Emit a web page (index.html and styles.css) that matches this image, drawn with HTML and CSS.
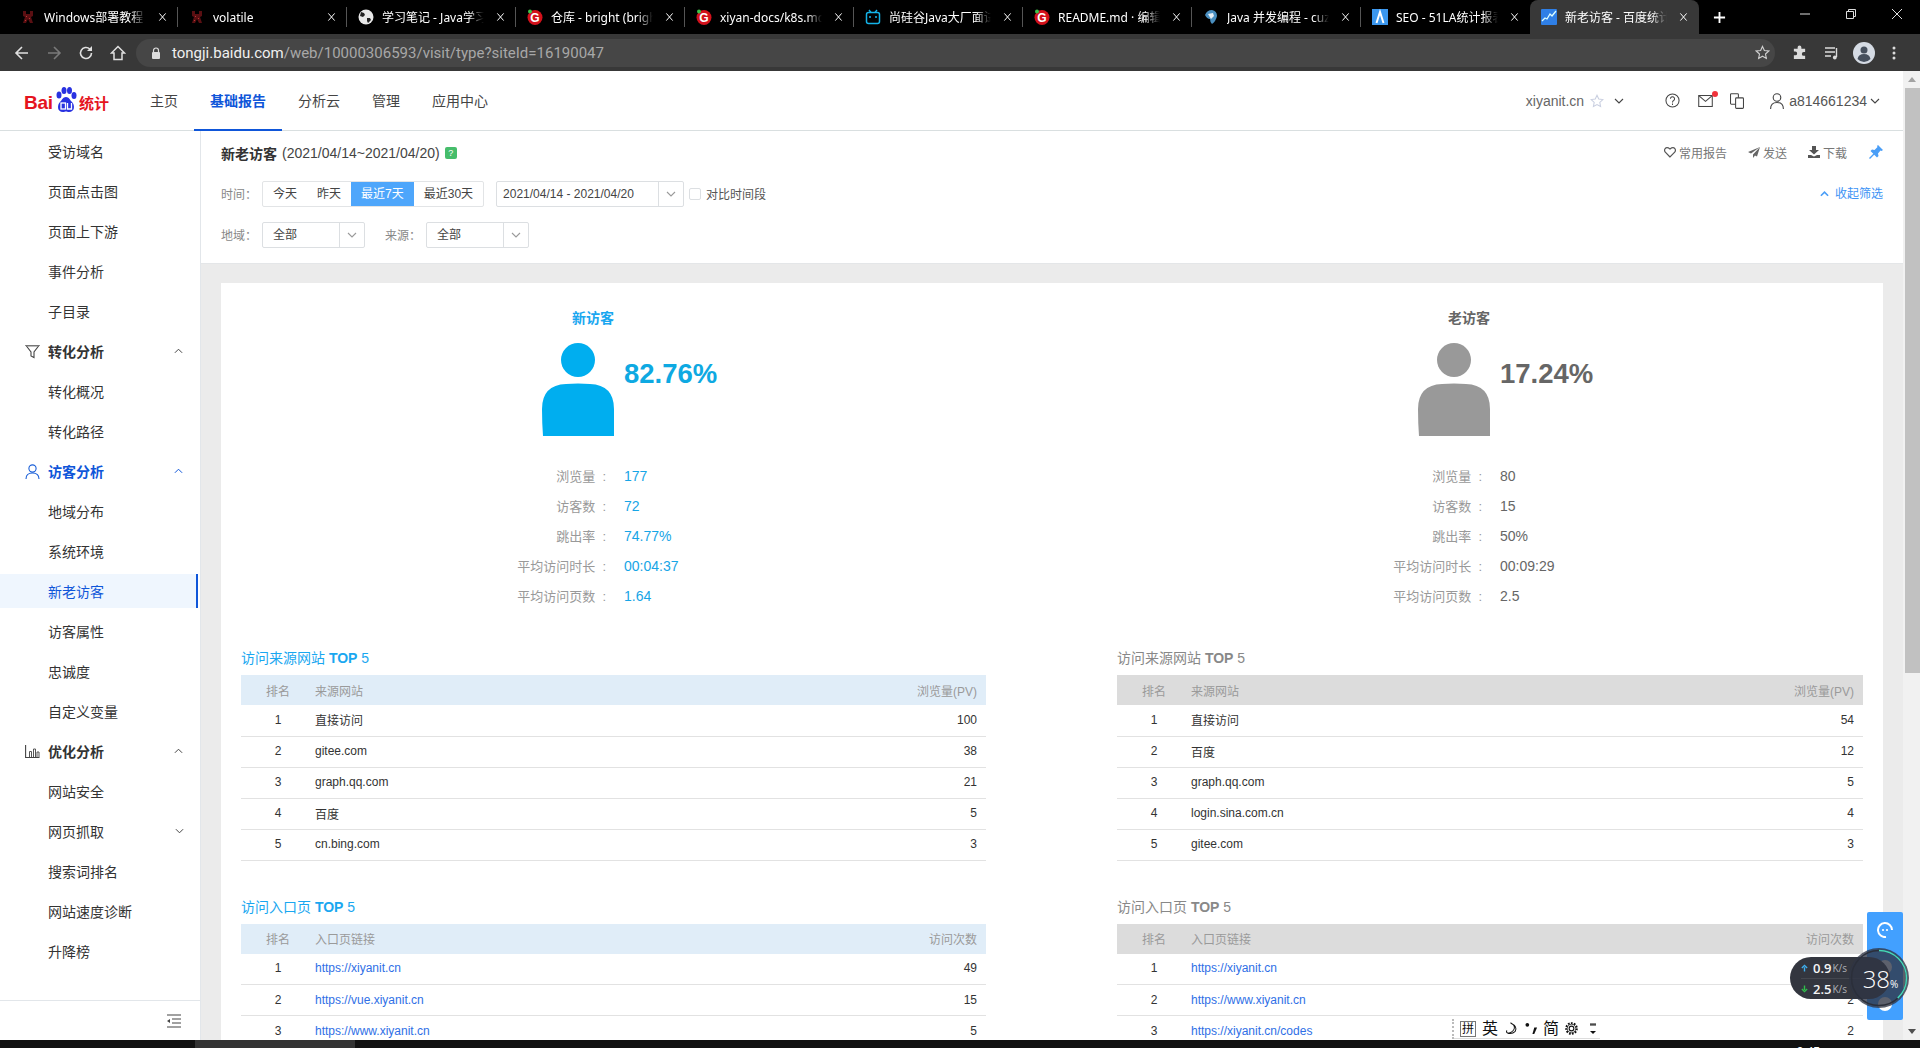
FILE: index.html
```html
<!DOCTYPE html>
<html lang="zh-CN">
<head>
<meta charset="utf-8">
<title>新老访客 - 百度统计</title>
<link rel="stylesheet" href="styles.css">
</head>
<body>
<svg class="defs" width="0" height="0" aria-hidden="true">
  <symbol id="i-x" viewBox="0 0 10 10"><path d="M1.500 1l7 8M8.500 1l-7 8" fill="none" stroke="#fff" stroke-width="1.100"/></symbol>
  <symbol id="f-red" viewBox="0 0 16 16"><path d="M3 2h3v3h4V2h3v5l-2 1 2 6h-3l-2-4-2 4H3l2-6-2-1z" fill="#5a0f12"/><path d="M6 7h1v1H6zM9 9h1v1H9zM5 11h1v1H5z" fill="#b33"/></symbol>
  <symbol id="f-gitee" viewBox="0 0 16 16"><circle cx="8" cy="8.500" r="7.500" fill="#d3111b"/><circle cx="3" cy="2.500" r="2" fill="#3ec24a"/><text x="8" y="13" text-anchor="middle" font-family="Liberation Sans" font-weight="bold" font-size="12" fill="#fff">G</text></symbol>
  <symbol id="f-globe" viewBox="0 0 16 16"><circle cx="8" cy="8" r="7.500" fill="#e8e8e8"/><path d="M3 3l3 1 1 2-2 2-3-1zM9 9l3 0 1 2-3 3-1-2z" fill="#222"/></symbol>
  <symbol id="f-tv" viewBox="0 0 16 16"><path d="M4 1l2 2.500M12 1l-2 2.500" stroke="#14b3e8" stroke-width="1.400"/><rect x="1.500" y="3.500" width="13" height="11" rx="2" fill="none" stroke="#14b3e8" stroke-width="1.500"/><path d="M5 7v2M11 7v2" stroke="#14b3e8" stroke-width="1.500"/></symbol>
  <symbol id="f-shark" viewBox="0 0 16 16"><path d="M2 6Q4 1 9 1q5 1 5 6-1 5-5 8-2-2-2-5Q4 10 2 6z" fill="#4a8fc0"/><path d="M5 5l5-1 1 3-3 3z" fill="#e6eef5"/></symbol>
  <symbol id="f-a" viewBox="0 0 16 16"><rect width="16" height="16" fill="#3b97ee"/><path d="M4.500 14L8 3l3.500 11" fill="none" stroke="#fff" stroke-width="2"/></symbol>
  <symbol id="f-chart" viewBox="0 0 16 16"><rect width="16" height="16" rx="1" fill="#2f7fe6"/><path d="M1 12l3-3 2 1 3-5 2 2 4-5" fill="none" stroke="#dff" stroke-width="1.300"/></symbol>
  <symbol id="i-down" viewBox="0 0 10 6"><path d="M1 1l4 4 4-4" fill="none" stroke="currentColor" stroke-width="1.100"/></symbol>
  <symbol id="i-up" viewBox="0 0 10 6"><path d="M1 5l4-4 4 4" fill="none" stroke="currentColor" stroke-width="1.100"/></symbol>
  <symbol id="i-person" viewBox="0 0 72 93"><circle cx="36" cy="17" r="17"/><path d="M1 93Q0 80 0 66 0 42 24 41q12-1 24 0 24 1 24 25v27z"/></symbol>
</svg>

<div class="window">
  <header class="tabstrip">
    <div class="tab"><svg class="favicon"><use href="#f-red"/></svg><span class="tab-title">Windows部署教程</span><svg class="tab-x"><use href="#i-x"/></svg></div>
    <div class="tab"><svg class="favicon"><use href="#f-red"/></svg><span class="tab-title">volatile</span><svg class="tab-x"><use href="#i-x"/></svg></div>
    <div class="tab"><svg class="favicon"><use href="#f-globe"/></svg><span class="tab-title">学习笔记 - Java学习笔记</span><svg class="tab-x"><use href="#i-x"/></svg></div>
    <div class="tab"><svg class="favicon"><use href="#f-gitee"/></svg><span class="tab-title">仓库 - bright (bright)</span><svg class="tab-x"><use href="#i-x"/></svg></div>
    <div class="tab"><svg class="favicon"><use href="#f-gitee"/></svg><span class="tab-title">xiyan-docs/k8s.md</span><svg class="tab-x"><use href="#i-x"/></svg></div>
    <div class="tab"><svg class="favicon"><use href="#f-tv"/></svg><span class="tab-title">尚硅谷Java大厂面试题</span><svg class="tab-x"><use href="#i-x"/></svg></div>
    <div class="tab"><svg class="favicon"><use href="#f-gitee"/></svg><span class="tab-title">README.md · 编辑器</span><svg class="tab-x"><use href="#i-x"/></svg></div>
    <div class="tab"><svg class="favicon"><use href="#f-shark"/></svg><span class="tab-title">Java 并发编程 - cuz</span><svg class="tab-x"><use href="#i-x"/></svg></div>
    <div class="tab tab-before-active"><svg class="favicon"><use href="#f-a"/></svg><span class="tab-title">SEO - 51LA统计报表</span><svg class="tab-x"><use href="#i-x"/></svg></div>
    <div class="tab tab-active"><svg class="favicon"><use href="#f-chart"/></svg><span class="tab-title">新老访客 - 百度统计</span><svg class="tab-x"><use href="#i-x"/></svg></div>
    <svg class="tab-plus" viewBox="0 0 14 14"><path d="M7 1v12M1 7h12" stroke="#fff" stroke-width="2"/></svg>
    <div class="winctl">
      <svg viewBox="0 0 12 12"><path d="M1 6h10" stroke="#ddd"/></svg>
      <svg viewBox="0 0 12 12"><path d="M1.500 3.500h7v7h-7zM3.500 3V1.500h7v7H9" fill="none" stroke="#ddd"/></svg>
      <svg viewBox="0 0 12 12"><path d="M1 1l10 10M11 1L1 11" stroke="#ddd"/></svg>
    </div>
  </header>

  <div class="toolbar">
    <svg class="tb-icon" viewBox="0 0 16 16"><path d="M14 8H2.500M8 2L2 8l6 6" fill="none" stroke="#e0e0e0" stroke-width="1.600"/></svg>
    <svg class="tb-icon" viewBox="0 0 16 16"><path d="M2 8h11.500M8 2l6 6-6 6" fill="none" stroke="#7a7a7a" stroke-width="1.600"/></svg>
    <svg class="tb-icon" viewBox="0 0 16 16"><path d="M13.500 8A5.500 5.500 0 1 1 11.800 4" fill="none" stroke="#e0e0e0" stroke-width="1.600"/><path d="M14 1v5H9z" fill="#e0e0e0"/></svg>
    <svg class="tb-icon" viewBox="0 0 16 16"><path d="M8 1.500L1.500 8H4v6.500h8V8h2.500z" fill="none" stroke="#e0e0e0" stroke-width="1.500"/></svg>
    <div class="omnibox">
      <svg class="lock" viewBox="0 0 10 12"><path d="M2.500 5V3.500a2.500 2.500 0 0 1 5 0V5" fill="none" stroke="#ddd" stroke-width="1.200"/><rect x="1" y="5" width="8" height="7" rx="1" fill="#ddd"/></svg>
      <span class="url"><span class="url-host">tongji.baidu.com</span>/web/10000306593/visit/type?siteId=16190047</span>
      <svg class="omni-star" viewBox="0 0 16 16"><path d="M8 1.500l2 4.300 4.700.6-3.500 3.200.9 4.700L8 12l-4.100 2.300.9-4.700-3.500-3.200L6 5.800z" fill="none" stroke="#d0d0d0" stroke-width="1.200"/></svg>
    </div>
    <svg class="tb-right puzzle" viewBox="0 0 16 16"><path d="M6 2.500a2 2 0 0 1 4 0V4h4v3.500h-1.500a2 2 0 0 0 0 4H14V15H2v-4h1.500a2 2 0 0 0 0-4H2V4h4z" fill="#dcdcdc"/></svg>
    <svg class="tb-right media" viewBox="0 0 16 16"><path d="M1 3h10M1 7h10M1 11h6" stroke="#dcdcdc" stroke-width="1.400"/><path d="M12.500 3v9" stroke="#dcdcdc" stroke-width="1.400"/><circle cx="10.800" cy="12.500" r="1.900" fill="#dcdcdc"/></svg>
    <svg class="tb-right avatar" viewBox="0 0 22 22"><circle cx="11" cy="11" r="11" fill="#d5dbe4"/><circle cx="11" cy="8" r="3.500" fill="#46505e"/><path d="M4.500 17q1-5 6.500-5t6.500 5q-3 3-6.500 3t-6.500-3z" fill="#46505e"/></svg>
    <svg class="tb-right dots" viewBox="0 0 4 16"><circle cx="2" cy="3" r="1.500" fill="#dcdcdc"/><circle cx="2" cy="8" r="1.500" fill="#dcdcdc"/><circle cx="2" cy="13" r="1.500" fill="#dcdcdc"/></svg>
  </div>

  <div class="viewport">
    <div class="page">
      <nav class="topnav">
        <div class="logo">
          <span class="logo-bai">Bai</span>
          <svg class="logo-paw" viewBox="0 0 24 26"><ellipse cx="5" cy="8" rx="2.500" ry="3.500" fill="#2932e1"/><ellipse cx="10" cy="3.500" rx="2.500" ry="3.500" fill="#2932e1"/><ellipse cx="15.500" cy="3.500" rx="2.500" ry="3.500" fill="#2932e1"/><ellipse cx="20" cy="8.500" rx="2.500" ry="3.500" fill="#2932e1"/><path d="M12 10c3 0 4 3 6 5 3 3 3 10-3 10-1.500 0-2-.5-3-.5s-1.500.5-3 .5c-6 0-6-7-3-10 2-2 3-5 6-5z" fill="#2932e1"/><rect x="7" y="16" width="4.500" height="6" fill="none" stroke="#fff" stroke-width="1.300"/><path d="M13.500 16v6h4v-6" fill="none" stroke="#fff" stroke-width="1.300"/></svg>
          <span class="logo-cn">统计</span>
        </div>
        <a class="nav-item">主页</a>
        <a class="nav-item nav-active">基础报告</a>
        <a class="nav-item">分析云</a>
        <a class="nav-item">管理</a>
        <a class="nav-item">应用中心</a>
        <div class="nav-right">
          <span class="site-name">xiyanit.cn</span>
          <svg class="nr-star" viewBox="0 0 16 16"><path d="M8 1.500l2 4.300 4.700.6-3.500 3.200.9 4.700L8 12l-4.100 2.300.9-4.700-3.500-3.200L6 5.800z" fill="none" stroke="#c9cfe0" stroke-width="1.200"/></svg>
          <svg class="nr-chev"><use href="#i-down"/></svg>
          <svg class="nr-help" viewBox="0 0 16 16"><circle cx="8" cy="8" r="7" fill="none" stroke="#444" stroke-width="1.100"/><path d="M5.800 6.200a2.200 2.200 0 1 1 3.400 1.800Q8 8.700 8 10M8 11.300v1.400" fill="none" stroke="#444" stroke-width="1.100"/></svg>
          <span class="nr-mail"><svg viewBox="0 0 17 14"><rect x=".6" y=".6" width="15.800" height="12.800" fill="none" stroke="#444" stroke-width="1.200"/><path d="M1 1l7.500 6.500L16 1" fill="none" stroke="#444" stroke-width="1.200"/></svg><i class="mail-dot"></i></span>
          <svg class="nr-copy" viewBox="0 0 16 18"><rect x=".6" y=".6" width="9" height="12" rx="1" fill="none" stroke="#444" stroke-width="1.200"/><rect x="6.400" y="5.400" width="9" height="12" rx="1" fill="#fff" stroke="#444" stroke-width="1.200"/></svg>
          <svg class="nr-user" viewBox="0 0 14 16"><circle cx="7" cy="4.500" r="3.800" fill="none" stroke="#444" stroke-width="1.100"/><path d="M.6 16q0-6.500 6.400-6.500T13.400 16" fill="none" stroke="#444" stroke-width="1.100"/></svg>
          <span class="user-name">a814661234</span>
          <svg class="nr-chev2"><use href="#i-down"/></svg>
        </div>
      </nav>

      <div class="layout">
        <aside class="sidebar">
          <a class="side-item">受访域名</a>
          <a class="side-item">页面点击图</a>
          <a class="side-item">页面上下游</a>
          <a class="side-item">事件分析</a>
          <a class="side-item">子目录</a>
          <a class="side-group">
            <svg class="side-icon" viewBox="0 0 15 15"><path d="M1 1.500h13L9 8v5.500L6 12V8z" fill="none" stroke="#444" stroke-width="1.100"/><path d="M1 1h13v1.500H1z" fill="#777"/></svg>
            <span>转化分析</span><svg class="side-chev"><use href="#i-up"/></svg>
          </a>
          <a class="side-item">转化概况</a>
          <a class="side-item">转化路径</a>
          <a class="side-group side-group-on">
            <svg class="side-icon" viewBox="0 0 15 15"><circle cx="7.500" cy="4.500" r="3.600" fill="none" stroke="#1a5fd8" stroke-width="1.100"/><path d="M1 15q0-6 6.500-6T14 15" fill="none" stroke="#1a5fd8" stroke-width="1.100"/></svg>
            <span>访客分析</span><svg class="side-chev"><use href="#i-up"/></svg>
          </a>
          <a class="side-item">地域分布</a>
          <a class="side-item">系统环境</a>
          <a class="side-item side-active">新老访客</a>
          <a class="side-item">访客属性</a>
          <a class="side-item">忠诚度</a>
          <a class="side-item">自定义变量</a>
          <a class="side-group">
            <svg class="side-icon" viewBox="0 0 15 15"><path d="M.6 1v12.500H14.500" fill="none" stroke="#444" stroke-width="1.100"/><path d="M4.500 13V7.500h2V13M8.500 13V5h2v8M12 13V8h2v5" fill="none" stroke="#555" stroke-width="1"/></svg>
            <span>优化分析</span><svg class="side-chev"><use href="#i-up"/></svg>
          </a>
          <a class="side-item">网站安全</a>
          <a class="side-item side-more">网页抓取<svg class="side-chev side-chev-down"><use href="#i-down"/></svg></a>
          <a class="side-item">搜索词排名</a>
          <a class="side-item">网站速度诊断</a>
          <a class="side-item">升降榜</a>
          <div class="side-foot">
            <svg viewBox="0 0 14 14"><path d="M0 1h14M5 5h9M5 9h9M0 13h14" stroke="#444" stroke-width="1.100"/><path d="M0 7l3-2v4z" fill="#444"/></svg>
          </div>
        </aside>

        <main class="content">
          <section class="filters">
            <div class="f-head">
              <strong class="f-name">新老访客</strong>
              <span class="f-date">(2021/04/14~2021/04/20)</span>
              <span class="f-help">?</span>
              <div class="f-actions">
                <span class="act"><svg viewBox="0 0 12 12"><path d="M6 11L1.300 6.200Q0 4.500 1 2.800 2.800.6 6 3q3.200-2.400 5 -.2 1 1.700-.3 3.400z" fill="none" stroke="#555" stroke-width="1.200"/></svg>常用报告</span>
                <span class="act"><svg viewBox="0 0 12 12"><path d="M12 1L0 6l3 1.500zM12 1L5 8.500V12l2-2.500 2 1z" fill="#666"/></svg>发送</span>
                <span class="act"><svg viewBox="0 0 12 12"><path d="M4 0h4v4h3L6 8.500 1 4h3z" fill="#555"/><path d="M0 9h3l3 1.500L9 9h3v3H0z" fill="#555"/></svg>下载</span>
                <svg class="act-pin" viewBox="0 0 14 14"><path d="M9 0l5 5-1.500 1-1-.5L9 8.500 9.500 11 8 12.500 5.200 9.700 1 14l-1-1 4.300-4.200L1.500 6 3 4.500 5.500 5 8.500 2 8 1z" fill="#4a9ef7"/></svg>
              </div>
            </div>
            <div class="f-row f-row-time">
              <span class="f-label">时间：</span>
              <div class="seg">
                <a class="seg-btn">今天</a><a class="seg-btn">昨天</a><a class="seg-btn seg-on">最近7天</a><a class="seg-btn">最近30天</a>
              </div>
              <div class="select select-date"><span class="select-text">2021/04/14 - 2021/04/20</span><span class="select-arrow"><svg><use href="#i-down"/></svg></span></div>
              <label class="compare"><i class="check"></i><span class="compare-text">对比时间段</span></label>
              <a class="collapse"><svg viewBox="0 0 10 6"><path d="M1 5l4-4 4 4" fill="none" stroke="#4a9ef7" stroke-width="1.800"/></svg><span class="collapse-text">收起筛选</span></a>
            </div>
            <div class="f-row f-row-region">
              <span class="f-label">地域：</span>
              <div class="select select-all"><span class="select-text">全部</span><span class="select-arrow"><svg><use href="#i-down"/></svg></span></div>
              <span class="f-label f-label-src">来源：</span>
              <div class="select select-all"><span class="select-text">全部</span><span class="select-arrow"><svg><use href="#i-down"/></svg></span></div>
            </div>
          </section>

          <section class="card">
            <div class="col col-new">
              <h2 class="v-title">新访客</h2>
              <div class="v-hero">
                <svg class="v-person"><use href="#i-person"/></svg>
                <span class="v-pct">82.76%</span>
              </div>
              <dl class="stats">
                <div class="stat"><dt>浏览量&nbsp;&nbsp;:</dt><dd>177</dd></div>
                <div class="stat"><dt>访客数&nbsp;&nbsp;:</dt><dd>72</dd></div>
                <div class="stat"><dt>跳出率&nbsp;&nbsp;:</dt><dd>74.77%</dd></div>
                <div class="stat"><dt>平均访问时长&nbsp;&nbsp;:</dt><dd>00:04:37</dd></div>
                <div class="stat"><dt>平均访问页数&nbsp;&nbsp;:</dt><dd>1.64</dd></div>
              </dl>
              <h3 class="t-title">访问来源网站 <b>TOP</b> 5</h3>
              <table class="rank">
                <thead><tr><th class="c-rank">排名</th><th>来源网站</th><th class="c-num">浏览量(PV)</th></tr></thead>
                <tbody>
                  <tr><td class="c-rank">1</td><td>直接访问</td><td class="c-num">100</td></tr>
                  <tr><td class="c-rank">2</td><td>gitee.com</td><td class="c-num">38</td></tr>
                  <tr><td class="c-rank">3</td><td>graph.qq.com</td><td class="c-num">21</td></tr>
                  <tr><td class="c-rank">4</td><td>百度</td><td class="c-num">5</td></tr>
                  <tr><td class="c-rank">5</td><td>cn.bing.com</td><td class="c-num">3</td></tr>
                </tbody>
              </table>
              <h3 class="t-title">访问入口页 <b>TOP</b> 5</h3>
              <table class="rank">
                <thead><tr><th class="c-rank">排名</th><th>入口页链接</th><th class="c-num">访问次数</th></tr></thead>
                <tbody>
                  <tr><td class="c-rank">1</td><td><a class="link">https://xiyanit.cn</a></td><td class="c-num">49</td></tr>
                  <tr><td class="c-rank">2</td><td><a class="link">https://vue.xiyanit.cn</a></td><td class="c-num">15</td></tr>
                  <tr><td class="c-rank">3</td><td><a class="link">https://www.xiyanit.cn</a></td><td class="c-num">5</td></tr>
                </tbody>
              </table>
            </div>

            <div class="col col-old">
              <h2 class="v-title">老访客</h2>
              <div class="v-hero">
                <svg class="v-person"><use href="#i-person"/></svg>
                <span class="v-pct">17.24%</span>
              </div>
              <dl class="stats">
                <div class="stat"><dt>浏览量&nbsp;&nbsp;:</dt><dd>80</dd></div>
                <div class="stat"><dt>访客数&nbsp;&nbsp;:</dt><dd>15</dd></div>
                <div class="stat"><dt>跳出率&nbsp;&nbsp;:</dt><dd>50%</dd></div>
                <div class="stat"><dt>平均访问时长&nbsp;&nbsp;:</dt><dd>00:09:29</dd></div>
                <div class="stat"><dt>平均访问页数&nbsp;&nbsp;:</dt><dd>2.5</dd></div>
              </dl>
              <h3 class="t-title">访问来源网站 <b>TOP</b> 5</h3>
              <table class="rank">
                <thead><tr><th class="c-rank">排名</th><th>来源网站</th><th class="c-num">浏览量(PV)</th></tr></thead>
                <tbody>
                  <tr><td class="c-rank">1</td><td>直接访问</td><td class="c-num">54</td></tr>
                  <tr><td class="c-rank">2</td><td>百度</td><td class="c-num">12</td></tr>
                  <tr><td class="c-rank">3</td><td>graph.qq.com</td><td class="c-num">5</td></tr>
                  <tr><td class="c-rank">4</td><td>login.sina.com.cn</td><td class="c-num">4</td></tr>
                  <tr><td class="c-rank">5</td><td>gitee.com</td><td class="c-num">3</td></tr>
                </tbody>
              </table>
              <h3 class="t-title">访问入口页 <b>TOP</b> 5</h3>
              <table class="rank">
                <thead><tr><th class="c-rank">排名</th><th>入口页链接</th><th class="c-num">访问次数</th></tr></thead>
                <tbody>
                  <tr><td class="c-rank">1</td><td><a class="link">https://xiyanit.cn</a></td><td class="c-num">4</td></tr>
                  <tr><td class="c-rank">2</td><td><a class="link">https://www.xiyanit.cn</a></td><td class="c-num">2</td></tr>
                  <tr><td class="c-rank">3</td><td><a class="link">https://xiyanit.cn/codes</a></td><td class="c-num">2</td></tr>
                </tbody>
              </table>
            </div>
          </section>
        </main>
      </div>
    </div>

    <div class="scrollbar">
      <span class="sb-arrow sb-up"></span>
      <span class="sb-thumb"></span>
      <span class="sb-arrow sb-down"></span>
    </div>
  </div>

  <footer class="taskbar">
    <span class="task-on"></span>
    <span class="clock">9:45</span>
  </footer>

  <aside class="help-panel">
    <svg class="help-face" viewBox="0 0 16 16"><path d="M9 15A7 7 0 1 1 15 8" fill="none" stroke="#fff" stroke-width="2"/><circle cx="6" cy="8" r="1.100" fill="#fff"/><circle cx="10" cy="8" r="1.100" fill="#fff"/></svg>
    <svg class="help-chat" viewBox="0 0 16 16"><circle cx="8" cy="8" r="7" fill="#fff"/></svg>
    <svg class="help-chat" viewBox="0 0 16 16"><circle cx="8" cy="8" r="7" fill="#fff"/></svg>
  </aside>

  <aside class="netmon">
    <div class="net-pill">
      <div class="net-row"><svg viewBox="0 0 8 8"><path d="M4 8V3M1 4l3-3 3 3" fill="none" stroke="#3fb0f0" stroke-width="1.600"/></svg><b>0.9</b><small>K/s</small></div>
      <div class="net-row"><svg viewBox="0 0 8 8"><path d="M4 0v5M1 4l3 3 3-3" fill="none" stroke="#2fbf4a" stroke-width="1.600"/></svg><b>2.5</b><small>K/s</small></div>
    </div>
    <div class="net-dial">
      <svg viewBox="0 0 60 60"><circle cx="30" cy="30" r="27.500" fill="none" stroke="#2b2f3a" stroke-width="1.500"/><circle class="net-arc" cx="30" cy="30" r="27.500"/></svg>
      <span class="net-val">38<small>%</small></span>
    </div>
  </aside>

  <aside class="ime">
    <i class="ime-grip"></i>
    <span class="ime-pin">拼</span>
    <span class="ime-ch">英</span>
    <svg class="ime-moon" viewBox="0 0 14 14"><path d="M6 1q5 2 4 6t-7 5q5 1 8-2 3-5-5-9z M3 12q-2-1-1-3" fill="none" stroke="#111" stroke-width="1.100"/></svg>
    <svg class="ime-punc" viewBox="0 0 14 14"><circle cx="2.500" cy="3" r="2" fill="#111"/><path d="M10 6h3l-3 7H8z" fill="#111"/></svg>
    <span class="ime-ch">简</span>
    <svg class="ime-gear" viewBox="0 0 14 14"><circle cx="7" cy="7" r="2.200" fill="none" stroke="#111"/><circle cx="7" cy="7" r="5" fill="none" stroke="#111" stroke-width="1.800" stroke-dasharray="1.600 1.200"/><circle cx="7" cy="7" r="4" fill="none" stroke="#111" stroke-width=".7"/></svg>
    <svg class="ime-more" viewBox="0 0 8 14"><path d="M1 3h6M1 2h6" stroke="#111"/><path d="M1 9h6l-3 3z" fill="#111"/></svg>
  </aside>
</div>
</body>
</html>
```

FILE: styles.css
```css
* { box-sizing: border-box; }
html, body { margin: 0; height: 100%; overflow: hidden; }
body {
  font-family: "Liberation Sans", "Noto Sans CJK SC", sans-serif;
  font-size: 12px;
  color: #333;
  background: #000;
}
.defs { position: absolute; }
a { color: inherit; text-decoration: none; }
svg { display: block; }
h2, h3, dl, dd, dt { margin: 0; padding: 0; font-weight: normal; }

.window {
  position: relative;
  width: 1920px;
  height: 1048px;
  display: flex;
  flex-direction: column;
  overflow: hidden;
}

/* Browser chrome */
.tabstrip {
  height: 34px;
  flex: none;
  background: #000;
  display: flex;
  align-items: stretch;
  padding-left: 9px;
}
.tab {
  width: 169px;
  flex: none;
  display: flex;
  align-items: center;
  padding-left: 11px;
  color: #fff;
  position: relative;
}
.tab::after {
  content: "";
  position: absolute;
  right: 0;
  top: 7px;
  bottom: 7px;
  width: 1px;
  background: #555;
}
.tab-before-active::after, .tab-active::after { display: none; }
.tab-active {
  background: #383838;
  border-radius: 8px 8px 0 0;
}
.favicon { width: 16px; height: 16px; flex: none; }
.tab-title {
  margin-left: 8px;
  width: 102px;
  flex: none;
  font-family: "Noto Sans", "Noto Sans CJK SC", sans-serif;
  font-size: 12px;
  white-space: nowrap;
  overflow: hidden;
  -webkit-mask-image: linear-gradient(90deg, #000 85%, transparent);
  mask-image: linear-gradient(90deg, #000 85%, transparent);
}
.tab-x { width: 9px; height: 10px; margin-left: 12px; flex: none; }
.tab-plus { width: 13px; height: 13px; margin-left: 14px; align-self: center; flex: none; }
.winctl {
  margin-left: auto;
  margin-right: 17px;
  display: flex;
  align-items: center;
  gap: 34px;
  padding-bottom: 6px;
}
.winctl svg { width: 12px; height: 12px; }

.toolbar {
  height: 37px;
  flex: none;
  background: #383838;
  display: flex;
  align-items: center;
  padding: 0 14px 0 14px;
}
.tb-icon { width: 16px; height: 16px; margin-right: 16px; flex: none; }
.omnibox {
  width: 1639px;
  height: 28px;
  margin-left: -6px;
  background: #464646;
  border-radius: 14px;
  display: flex;
  align-items: center;
  padding-left: 15px;
  padding-right: 9px;
  flex: none;
}
.lock { width: 10px; height: 12px; flex: none; }
.url {
  margin-left: 11px;
  font-family: "Roboto", "Liberation Sans", sans-serif;
  font-size: 15px;
  color: #a8a8a8;
  white-space: nowrap;
}
.url-host { color: #f0f0f0; }
.omni-star { width: 15px; height: 15px; margin-left: auto; margin-right: -4px; }
.tb-right { flex: none; }
.puzzle { width: 15px; height: 15px; margin-left: 17px; }
.media { width: 16px; height: 16px; margin-left: 17px; }
.avatar { width: 22px; height: 22px; margin-left: 13px; }
.dots { width: 4px; height: 16px; margin-left: 17px; }

/* Viewport */
.viewport {
  flex: 1;
  min-height: 0;
  display: flex;
  background: #fff;
}
.page {
  flex: 1;
  min-width: 0;
  display: flex;
  flex-direction: column;
}
.scrollbar {
  width: 17px;
  flex: none;
  background: #f1f1f1;
  display: flex;
  flex-direction: column;
  align-items: flex-end;
}
.sb-arrow { width: 17px; height: 17px; display: flex; align-items: center; justify-content: center; flex: none; }
.sb-up::before { content: ""; border: 4px solid transparent; border-bottom: 5px solid #a3a3a3; border-top: 0; }
.sb-down { margin-top: auto; }
.sb-down::before { content: ""; border: 4px solid transparent; border-top: 5px solid #505050; border-bottom: 0; }
.sb-thumb { width: 15px; height: 585px; background: #c1c1c1; flex: none; }

/* Top navigation */
.topnav {
  height: 60px;
  flex: none;
  display: flex;
  align-items: stretch;
  border-bottom: 1px solid #d9dfe0;
  padding-left: 24px;
  font-size: 14px;
}
.logo {
  width: 86px;
  margin-right: 24px;
  display: flex;
  align-items: flex-end;
  padding-bottom: 17px;
  flex: none;
}
.logo-bai {
  font-size: 19px;
  font-weight: bold;
  color: #e5141e;
  line-height: 20px;
  letter-spacing: -.3px;
  width: 29px;
  flex: none;
}
.logo-paw { width: 24px; height: 26px; flex: none; margin-left: 1px; }
.logo-cn {
  font-size: 15px;
  font-weight: bold;
  color: #e5141e;
  line-height: 18px;
  margin-left: 1px;
  white-space: nowrap;
  flex: none;
}
.nav-item {
  padding: 0 16px;
  display: flex;
  align-items: center;
  color: #444;
  border-bottom: 2px solid transparent;
  margin-bottom: -1px;
}
.nav-active {
  color: #0f56d9;
  font-weight: bold;
  border-bottom-color: #0f56d9;
}
.nav-right {
  margin-left: auto;
  display: flex;
  align-items: center;
  padding-right: 23px;
  color: #666;
}
.site-name { color: #666; }
.nr-star { width: 14px; height: 14px; margin-left: 6px; }
.nr-chev { width: 10px; height: 6px; margin-left: 10px; color: #444; }
.nr-help { width: 15px; height: 15px; margin-left: 41px; }
.nr-mail { width: 15px; height: 12px; margin-left: 18px; position: relative; display: block; }
.nr-mail svg { width: 15px; height: 12px; }
.mail-dot {
  position: absolute;
  right: -5px;
  top: -4px;
  width: 6px;
  height: 6px;
  border-radius: 50%;
  background: #f0333c;
}
.nr-copy { width: 14px; height: 16px; margin-left: 17px; }
.nr-user { width: 14px; height: 16px; margin-left: 26px; }
.user-name { margin-left: 5px; color: #555; }
.nr-chev2 { width: 10px; height: 6px; margin-left: 3px; color: #444; }

/* Layout */
.layout { flex: 1; min-height: 0; display: flex; }
.sidebar {
  width: 201px;
  flex: none;
  background: #fff;
  border-right: 1px solid #e2e6ea;
  padding: 0 2px 0 0;
  display: flex;
  flex-direction: column;
  font-size: 14px;
  color: #333;
}
.side-item {
  height: 40px;
  flex: none;
  display: flex;
  align-items: center;
  padding-left: 48px;
  color: #333;
  position: relative;
}
.side-active {
  height: 34px;
  margin: 3px 0;
  color: #0f56d9;
  background: #eff6fe;
  border-right: 2px solid #0f56d9;
}
.side-group {
  height: 40px;
  flex: none;
  display: flex;
  align-items: center;
  padding-left: 25px;
  font-weight: bold;
  color: #333;
}
.side-group span { margin-left: 8px; }
.side-group-on { color: #0f56d9; }
.side-icon { width: 15px; height: 15px; flex: none; }
.side-chev { width: 9px; height: 6px; margin-left: auto; margin-right: 15px; color: #444; }
.side-chev-down { margin-right: 14px; }
.side-group-on .side-chev { color: #0f56d9; }
.side-foot {
  margin-top: auto;
  height: 40px;
  flex: none;
  border-top: 1px solid #e2e6ea;
  margin-right: -2px;
  display: flex;
  align-items: center;
  justify-content: flex-end;
  padding-right: 19px;
}
.side-foot svg { width: 14px; height: 14px; }

.content {
  flex: 1;
  min-width: 0;
  background: #ebebeb;
  overflow: hidden;
}

/* Filters */
.filters {
  height: 133px;
  background: #fff;
  border-bottom: 1px solid #e4e6e8;
  padding: 10px 20px 0 20px;
  font-size: 12px;
}
.f-head { height: 24px; display: flex; align-items: center; }
.f-name { font-size: 14px; font-weight: bold; color: #333; }
.f-date { font-size: 14px; color: #444; margin-left: 5px; }
.f-help {
  width: 12px;
  height: 12px;
  margin-left: 5px;
  border-radius: 2px;
  background: #46bd6b;
  color: #fff;
  font-size: 9px;
  line-height: 12px;
  text-align: center;
}
.f-actions { margin-left: auto; display: flex; align-items: center; color: #777; padding-bottom: 2px; }
.act { display: flex; align-items: center; gap: 3px; margin-right: 21px; }
.act svg { width: 12px; height: 12px; flex: none; }
.act:nth-child(3) { margin-right: 22px; }
.act-pin { width: 14px; height: 14px; }
.f-row { display: flex; align-items: center; height: 26px; }
.f-row-time { margin-top: 16px; }
.f-row-region { margin-top: 15px; }
.f-label { width: 41px; flex: none; color: #888; padding-bottom: 2px; }
.f-label-src { margin-left: 20px; }
.seg {
  display: flex;
  height: 26px;
  border: 1px solid #e2e4e6;
  border-radius: 2px;
  color: #444;
  flex: none;
}
.seg-btn { padding: 0 10px; line-height: 24px; flex: none; }
.seg-on { background: #4ea6fb; color: #fff; }
.select {
  height: 26px;
  border: 1px solid #dcdfe2;
  border-radius: 2px;
  display: flex;
  align-items: stretch;
  flex: none;
  color: #444;
}
.select-date { width: 188px; margin-left: 12px; }
.select-all { width: 103px; }
.select-text { flex: 1; line-height: 24px; white-space: nowrap; }
.select-date .select-text { padding-left: 6px; }
.select-all .select-text { padding-left: 10px; }
.select-arrow {
  width: 25px;
  flex: none;
  border-left: 1px solid #dcdfe2;
  display: flex;
  align-items: center;
  justify-content: center;
}
.select-arrow svg { width: 10px; height: 6px; color: #9a9a9a; }
.compare { display: flex; align-items: center; margin-left: 5px; color: #555; }
.compare-text { padding-bottom: 2px; }
.check {
  width: 12px;
  height: 12px;
  border: 1px solid #dcdfe2;
  border-radius: 2px;
  margin-right: 5px;
}
.collapse { margin-left: auto; display: flex; align-items: center; gap: 6px; color: #3d93f5; }
.collapse-text { padding-bottom: 3px; }
.collapse svg { width: 9px; height: 6px; }

/* Card */
.card {
  margin: 19px 20px 0 20px;
  padding: 20px;
  background: #fff;
  display: grid;
  grid-template-columns: 745px 746px;
  column-gap: 131px;
  min-height: 900px;
}
.col { min-width: 0; }
.v-title {
  font-size: 14px;
  font-weight: bold;
  line-height: 30px;
  margin-left: 331px;
}
.v-hero { display: flex; align-items: flex-start; margin-top: 10px; padding-left: 301px; }
.v-person { width: 72px; height: 93px; flex: none; }
.v-pct {
  font-size: 27.5px;
  font-weight: bold;
  line-height: 32px;
  margin: 15px 0 0 10px;
}
.col-new .v-title { color: #1aa7f0; }
.col-new .v-person { fill: #00aeef; }
.col-new .v-pct { color: #0ea9e2; }
.col-new .stat dd { color: #17a5e6; }
.col-new .t-title { color: #1aa7f0; }
.col-new th { background: #e0edf8; }
.col-old .v-title { color: #666; }
.col-old .v-person { fill: #999; }
.col-old .v-pct { color: #666; }
.col-old .stat dd { color: #666; }
.col-old .t-title { color: #888; }
.col-old th { background: #dcdcdc; }

.stats { margin-top: 25px; }
.stat { display: flex; height: 30px; align-items: center; }
.stat dt { width: 365px; flex: none; text-align: right; font-size: 13px; color: #999; padding-bottom: 1px; }
.stat dd { margin-left: 18px; font-size: 14px; }

.t-title {
  margin: 37px 0 7px;
  font-size: 14px;
  line-height: 20px;
  white-space: nowrap;
}
.rank + .t-title { margin-top: 36px; }
.rank {
  width: 100%;
  border-collapse: collapse;
  table-layout: fixed;
  font-size: 12px;
}
.rank th {
  height: 30px;
  padding: 0;
  font-weight: normal;
  text-align: left;
  color: #9a9a9a;
}
.rank td {
  height: 31px;
  padding: 0 0 1px;
  border-bottom: 1px solid #e2e2e2;
  color: #333;
}
.rank .c-rank { width: 74px; text-align: center; }
.rank .c-num { width: 120px; text-align: right; padding-right: 9px; }
.link { color: #2f6fe6; }

/* Browser extensions overlays */
.help-panel {
  position: absolute;
  left: 1867px;
  top: 912px;
  width: 36px;
  height: 108px;
  background: #42a0ff;
  border-radius: 2px;
  display: flex;
  flex-direction: column;
  align-items: center;
  padding-top: 10px;
  gap: 21px;
}
.help-face { width: 16px; height: 16px; }
.help-chat { width: 16px; height: 16px; }

.netmon {
  position: absolute;
  left: 1790px;
  top: 948px;
  width: 119px;
  height: 60px;
  display: flex;
  align-items: center;
}
.net-pill {
  width: 100px;
  height: 42px;
  border-radius: 21px;
  background: #33363f;
  color: #fff;
  padding-left: 11px;
  display: flex;
  flex-direction: column;
}
.net-row {
  height: 21px;
  display: flex;
  align-items: center;
  font-family: "Open Sans", sans-serif;
}
.net-row + .net-row { border-top: 1px solid #44474f; }
.net-row svg { width: 7px; height: 8px; flex: none; }
.net-row b { font-weight: 600; font-size: 13px; margin-left: 5px; color: #f5f5f5; }
.net-row small { font-size: 10px; margin-left: 1px; color: #aeb0b5; }
.net-dial {
  position: absolute;
  right: 0;
  top: 0;
  width: 60px;
  height: 60px;
  border-radius: 50%;
  background: rgba(48, 52, 68, .78);
  display: flex;
  align-items: center;
  justify-content: center;
}
.net-dial svg { position: absolute; inset: 0; width: 60px; height: 60px; transform: rotate(-90deg); }
.net-arc {
  fill: none;
  stroke: #45d6b8;
  stroke-width: 1.500;
  stroke-dasharray: 65.7 200;
}
.net-val {
  position: relative;
  font-family: "Open Sans", sans-serif;
  font-weight: 300;
  font-size: 24px;
  color: #fff;
  margin-left: 3px;
}
.net-val small { font-size: 10px; font-weight: 400; }

.ime {
  position: absolute;
  left: 1452px;
  top: 1019px;
  width: 148px;
  height: 20px;
  background: #fff;
  border-bottom: 1px solid #ddd;
  display: flex;
  align-items: center;
  color: #111;
}
.ime-grip { width: 2px; height: 20px; border-left: 2px dotted #bbb; flex: none; }
.ime-pin {
  width: 16px;
  height: 16px;
  margin-left: 6px;
  border: 1px solid #777;
  font-size: 12px;
  line-height: 14px;
  text-align: center;
  flex: none;
}
.ime-ch { font-size: 16px; line-height: 18px; margin-left: 6px; flex: none; }
.ime-moon { width: 13px; height: 13px; margin-left: 7px; flex: none; }
.ime-punc { width: 13px; height: 13px; margin-left: 7px; flex: none; }
.ime-punc + .ime-ch { margin-left: 5px; }
.ime-gear { width: 15px; height: 15px; margin-left: 5px; flex: none; }
.ime-more { width: 8px; height: 14px; margin-left: 10px; flex: none; }

/* Taskbar */
.taskbar {
  height: 8px;
  flex: none;
  background: #111;
  display: flex;
  overflow: hidden;
  color: #fff;
}
.task-on { width: 160px; margin-left: 195px; background: #333; flex: none; }
.clock { margin-left: auto; margin-right: 100px; font-size: 12px; line-height: 14px; padding-top: 5px; }
```
